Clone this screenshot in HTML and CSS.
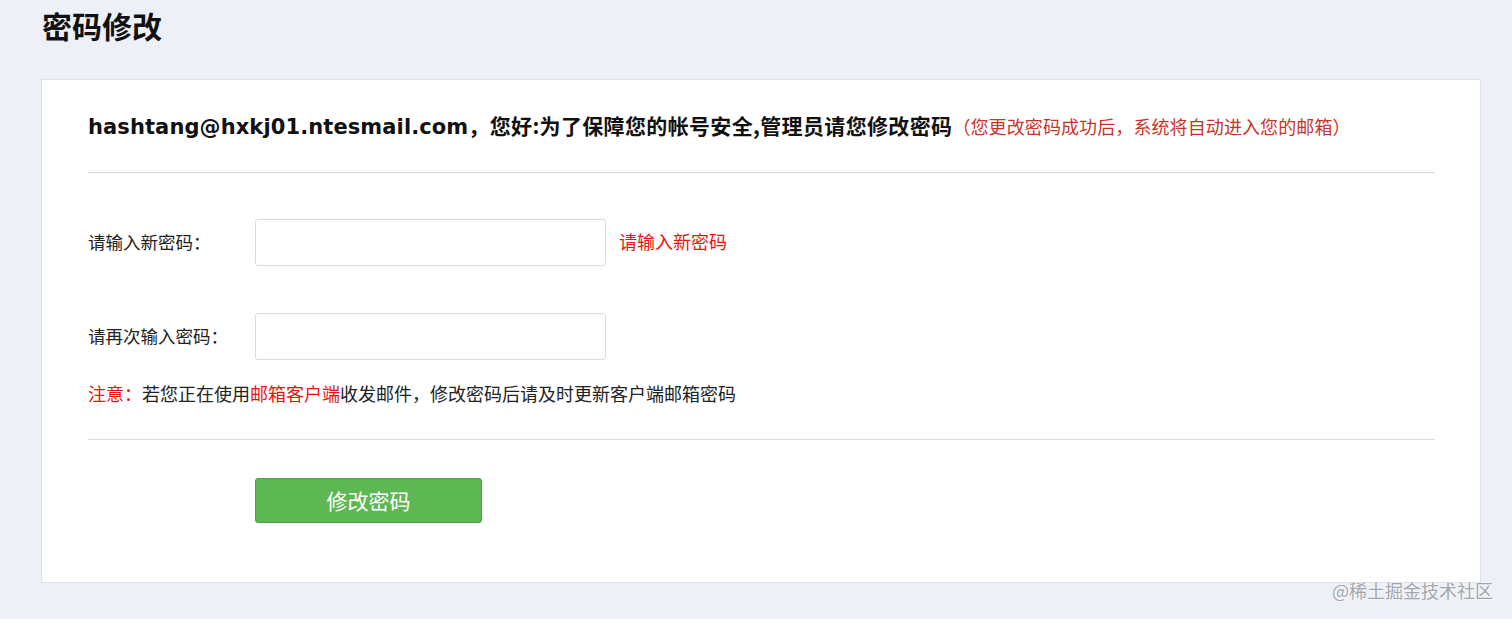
FILE: index.html
```html
<!DOCTYPE html>
<html lang="zh-CN">
<head>
<meta charset="utf-8">
<title>密码修改</title>
<link rel="stylesheet" href="styles.css">
</head>
<body>
<div class="page">
  <h1 class="page-title">密码修改</h1>
  <div class="card">
    <div class="card-head">
      <span class="email">hashtang@hxkj01.ntesmail.com</span><span class="greet">，您好:为了保障您的帐号安全,管理员请您修改密码</span><span class="tip">（您更改密码成功后，系统将自动进入您的邮箱）</span>
    </div>
    <form class="form">
      <div class="fields">
        <div class="row">
          <label class="label">请输入新密码：</label>
          <input class="input" type="password">
          <span class="hint">请输入新密码</span>
        </div>
        <div class="row">
          <label class="label">请再次输入密码：</label>
          <input class="input" type="password">
        </div>
        <p class="note"><span class="red">注意：</span>若您正在使用<span class="red">邮箱客户端</span>收发邮件，修改密码后请及时更新客户端邮箱密码</p>
      </div>
      <div class="actions">
        <button class="btn" type="button">修改密码</button>
      </div>
    </form>
  </div>
  <div class="watermark">@稀土掘金技术社区</div>
</div>
</body>
</html>
```

FILE: styles.css
```css
html, body {
  margin: 0;
  padding: 0;
  background: #edf1f7;
}
body {
  font-family: "Noto Sans CJK SC", "Noto Sans", sans-serif;
  color: #222;
  height: 619px;
  overflow: hidden;
}
.page {
  position: relative;
  padding: 4px 31px 0 41px;
  height: 615px;
}
.page-title {
  margin: 0 0 33px 1px;
  font-size: 30px;
  line-height: 42px;
  font-weight: 700;
  color: #111;
}
.card {
  background: #fff;
  border: 1px solid #dfe2e6;
  padding: 0 45px 59px 46px;
}
.card-head {
  box-sizing: border-box;
  height: 93px;
  padding-top: 31px;
  line-height: 28px;
  border-bottom: 1px solid #dcdcdc;
  white-space: nowrap;
}
.email {
  font-family: "DejaVu Sans", Verdana, sans-serif;
  font-weight: 700;
  font-size: 21px;
  color: #111;
  letter-spacing: 0.1px;
}
.greet {
  font-family: "Noto Sans CJK SC", sans-serif;
  font-weight: 700;
  font-size: 21px;
  color: #111;
  letter-spacing: 0.35px;
}
.tip {
  font-size: 18px;
  color: #c9342a;
  letter-spacing: 0.1px;
}
.form {
  margin: 0;
}
.fields {
  padding-top: 46px;
  padding-bottom: 33px;
  border-bottom: 1px solid #dcdcdc;
}
.row {
  display: flex;
  align-items: center;
  height: 47px;
  margin-bottom: 47px;
}
.row + .row {
  margin-bottom: 20px;
}
.label {
  width: 167px;
  font-size: 17.5px;
  line-height: 24px;
  margin-top: -2px;
  color: #222;
}
.input {
  box-sizing: border-box;
  width: 351px;
  height: 47px;
  border: 1px solid #dcdcdc;
  border-radius: 3px;
  margin: 0;
  padding: 0 10px;
  outline: none;
  background: #fff;
}
.hint {
  margin-left: 13px;
  margin-top: -3px;
  font-size: 18px;
  line-height: 24px;
  color: #e8150e;
}
.note {
  margin: 0;
  font-size: 18px;
  line-height: 26px;
  color: #222;
}
.red {
  color: #e8150e;
}
.actions {
  padding: 38px 0 0 167px;
}
.btn {
  box-sizing: border-box;
  width: 227px;
  height: 45px;
  margin: 0;
  padding: 0;
  background: #5db753;
  border: 1px solid #4a9d41;
  border-radius: 3px;
  color: #fff;
  font-family: "Noto Sans CJK SC", sans-serif;
  font-size: 21px;
  line-height: 43px;
  cursor: pointer;
}
.watermark {
  position: absolute;
  right: 19px;
  top: 577px;
  font-family: "Noto Sans CJK SC", sans-serif;
  font-size: 18px;
  line-height: 26px;
  color: #a3a7ad;
  text-shadow: 0 0 2px #fff;
}
```
